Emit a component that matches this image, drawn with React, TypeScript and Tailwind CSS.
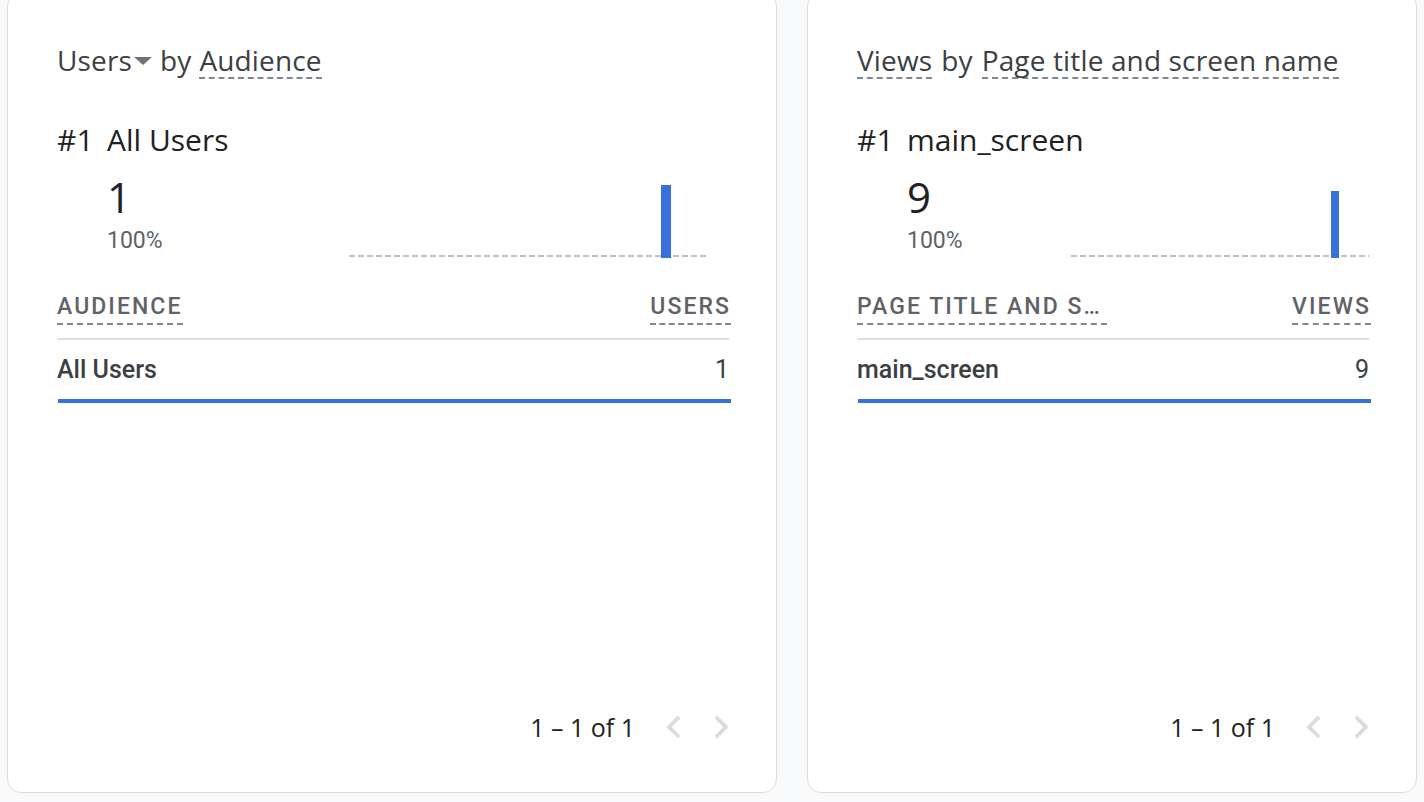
import React from 'react';
import { MdChevronLeft, MdChevronRight } from 'react-icons/md';

interface CardProps {
  width: string;
  title: React.ReactNode;
  topName: string;
  value: string;
  chartWidth: number;
  chartMr: string;
  barX: number;
  barW: number;
  barTop: number;
  colLabel: string;
  metricLabel: string;
  rowName: string;
  rowValue: string;
}

const dashed = 'inline-block border-b-2 border-dashed border-[#80868b] pb-[1px]';

const MiniChart: React.FC<{ w: number; barX: number; barW: number; barTop: number }> = ({ w, barX, barW, barTop }) => (
  <svg width={w} height={84} className="block">
    <line x1={0} y1={81} x2={w} y2={81} stroke="#bdc1c6" strokeWidth={2} strokeDasharray="6 3" />
    <rect x={barX} y={barTop} width={barW} height={83 - barTop} fill="#3871dc" />
  </svg>
);

const Card: React.FC<CardProps> = (p) => {
  return (
    <div className={`${p.width} h-[801px] shrink-0 bg-white border border-[#dadce0] rounded-[14px] flex flex-col pt-[51px] pl-[49px] pr-[47px] pb-[42px]`}>
      {/* titulo */}
      <div className="flex items-start text-[28px] leading-[32px] tracking-[0.005em] text-[#3c4043] font-['Open_Sans',sans-serif]">
        {p.title}
      </div>

      {/* top item */}
      <div className="mt-[45px] flex text-[30px] leading-[32px] text-[#202124] font-['Open_Sans',sans-serif]">
        <span className="w-[50px]">#1</span>
        <span>{p.topName}</span>
      </div>

      <div className="mt-[19px] flex h-[84px]">
        <div className="pl-[50px] flex flex-col">
          <span className="text-[42px] leading-[44px] text-[#202124] font-['Open_Sans',sans-serif]">{p.value}</span>
          <span className="mt-[9px] text-[23px] leading-[26px] text-[#5f6368] font-['Roboto',sans-serif]">100%</span>
        </div>
        <div className={`ml-auto ${p.chartMr}`}>
          <MiniChart w={p.chartWidth} barX={p.barX} barW={p.barW} barTop={p.barTop} />
        </div>
      </div>

      {/* tabela */}
      <div className="mt-[35px] flex justify-between items-start font-['Roboto',sans-serif] text-[23px] leading-[26px] font-medium tracking-[0.09em] uppercase text-[#5f6368]">
        <span className="max-w-[250px] truncate border-b-2 border-dashed border-[#80868b] pb-[3px]">{p.colLabel}</span>
        <span className="border-b-2 border-dashed border-[#80868b] pb-[3px] -mr-[2px]">{p.metricLabel}</span>
      </div>
      <div className="mt-[13px] h-[2px] bg-[#e0e0e0]" />
      <div className="mt-[16px] flex justify-between font-['Roboto',sans-serif] text-[25px] leading-[28px] text-[#3c4043]">
        <span className="font-medium">{p.rowName}</span>
        <span>{p.rowValue}</span>
      </div>
      <div className="mt-[15px] ml-[1px] -mr-[2px] h-[4px] bg-[#3871dc]" />

      {/* paginacao */}
      <div className="mt-auto flex items-center justify-end font-['Open_Sans',sans-serif] text-[25px] leading-[28px] text-[#202124]">
        <span>1 – 1 of 1</span>
        <MdChevronLeft size={46} className="ml-[16px] text-[#dadce0]" />
        <MdChevronRight size={46} className="ml-[1px] -mr-[15px] text-[#dadce0]" />
      </div>
    </div>
  );
};

export default function App() {
  return (
    <div className="w-[1424px] h-[802px] overflow-hidden bg-[#f8f9fa]">
      <div className="flex gap-[30px] pl-[7px] -mt-[8px]">
        <Card
          width="w-[770px]"
          title={
            <>
              <span className="pb-[3px]">Users</span>
              <svg width="18" height="8" className="ml-[2px] mt-[13px]">
                <polygon points="0,0 18,0 9,8" fill="#6f7378" />
              </svg>
              <span className="ml-[8px] pb-[3px]">by</span>
              <span className={`ml-[8px] ${dashed}`}>Audience</span>
            </>
          }
          topName="All Users"
          value="1"
          chartWidth={358}
          chartMr="mr-[22px]"
          barX={312}
          barW={10}
          barTop={10}
          colLabel="Audience"
          metricLabel="Users"
          rowName="All Users"
          rowValue="1"
        />
        <Card
          width="w-[610px]"
          title={
            <>
              <span className={dashed}>Views</span>
              <span className="ml-[9px]">by</span>
              <span className={`ml-[9px] ${dashed}`}>Page title and screen name</span>
            </>
          }
          topName="main_screen"
          value="9"
          chartWidth={298}
          chartMr="mr-0"
          barX={260}
          barW={8}
          barTop={16}
          colLabel="Page title and screen name"
          metricLabel="Views"
          rowName="main_screen"
          rowValue="9"
        />
      </div>
    </div>
  );
}
